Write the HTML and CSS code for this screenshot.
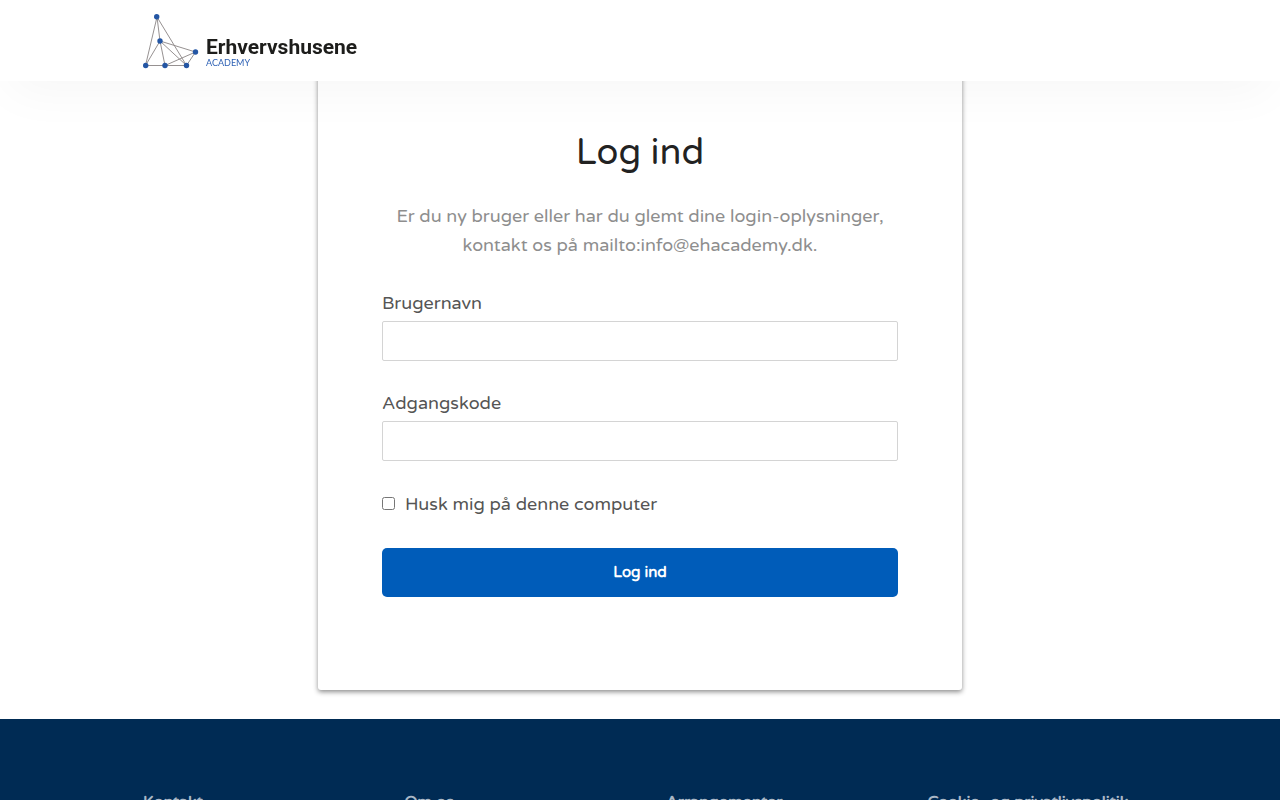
FILE: index.html
```html
<!DOCTYPE html>
<html lang="da">

<head>
    <meta charset="UTF-8">
    <title>Log ind - Erhvervshusene Academy</title>
    <meta name="viewport" content="width=device-width, initial-scale=1.0">
    <link rel="stylesheet" href="styles.css">
</head>

<body>
    <header class="site-header">
        <div class="container">
            <a class="logo" href="#" aria-label="Erhvervshusene Academy">
                <svg class="logo-mark" width="58" height="58" viewBox="1 0 58 58" aria-hidden="true">
                    <g fill="none" stroke="#8a8585" stroke-width="0.9">
                        <path d="M15 5 3.500 53.500H44.500L15 5 18 29 3.500 53.500" />
                        <path d="M23 53.500 18 29 53.500 40 23 53.500M18 29 44.500 53.500 53.500 40" />
                    </g>
                    <g fill="#2456a4">
                        <circle cx="14.700" cy="4.700" r="2.700" />
                        <circle cx="18" cy="29" r="2.700" />
                        <circle cx="53.500" cy="40" r="2.700" />
                        <circle cx="3.700" cy="53.500" r="2.700" />
                        <circle cx="23" cy="53.500" r="2.700" />
                        <circle cx="44.500" cy="53.500" r="2.700" />
                    </g>
                </svg>
                <span class="logo-text">
                    <span class="logo-name">Erhvervshusene</span>
                    <span class="logo-sub">ACADEMY</span>
                </span>
            </a>
        </div>
    </header>

    <main class="page">
        <form class="login-card">
            <h1>Log ind</h1>
            <p class="intro">Er du ny bruger eller har du glemt dine login-oplysninger, kontakt os på mailto:info@ehacademy.dk.</p>

            <div class="field">
                <label for="username">Brugernavn</label>
                <input type="text" id="username" name="username">
            </div>
            <div class="field">
                <label for="password">Adgangskode</label>
                <input type="password" id="password" name="password">
            </div>
            <div class="remember">
                <input type="checkbox" id="remember" name="remember">
                <label for="remember">Husk mig på denne computer</label>
            </div>

            <button type="submit" class="btn">Log ind</button>
        </form>
    </main>

    <footer class="site-footer">
        <div class="container footer-columns">
            <h2>Kontakt</h2>
            <h2>Om os</h2>
            <h2>Arrangementer</h2>
            <h2>Cookie- og privatlivspolitik</h2>
        </div>
    </footer>
</body>

</html>
```

FILE: styles.css
```css
* {
    box-sizing: border-box;
}

body {
    margin: 0;
    background-color: #fff;
    color: #555;
    font-family: "Varela Round", Inter, sans-serif;
    font-size: 18px;
    line-height: 29px;
}

.container {
    max-width: 1046px;
    margin: 0 auto;
    padding: 0 26px;
}

/* header */
.site-header {
    position: fixed;
    top: 0;
    left: 0;
    right: 0;
    z-index: 10;
    padding: 12px 0 11px;
    background-color: #fff;
    box-shadow: 0 20px 50px -10px rgba(0, 0, 0, 0.04);
}

.logo {
    display: inline-flex;
    align-items: flex-end;
    gap: 5px;
    vertical-align: top;
    text-decoration: none;
}

.logo-mark {
    display: block;
}

.logo-text {
    display: flex;
    flex-direction: column;
    padding-bottom: 2px;
}

.logo-name {
    color: #1d1d1b;
    font-family: Roboto, sans-serif;
    font-size: 21px;
    font-weight: 700;
    line-height: 22px;
}

.logo-sub {
    color: #2f62b5;
    font-family: Lato, sans-serif;
    font-size: 9px;
    line-height: 10px;
}

/* login */
.page {
    padding: 60px 16px 29px;
}

.login-card {
    max-width: 644px;
    margin: 0 auto;
    padding: 71px 64px 93px;
    background-color: #fff;
    border-radius: 3px;
    box-shadow: 0 2px 5px rgba(0, 0, 0, 0.45);
}

h1 {
    margin: 0 0 27px;
    color: #222;
    font-size: 36px;
    font-weight: 400;
    line-height: 44px;
    text-align: center;
}

.intro {
    margin: 0 0 29px;
    color: #8e8e8e;
    text-align: center;
}

.field {
    margin-bottom: 28px;
}

.field label {
    display: block;
    margin-bottom: 3px;
}

.field input {
    display: block;
    width: 100%;
    height: 40px;
    padding: 8px;
    border: 1px solid #d4d4d4;
    border-radius: 2px;
    background-color: #fff;
    font: inherit;
}

.remember {
    display: flex;
    align-items: baseline;
    gap: 10px;
    padding-top: 1px;
    margin-bottom: 29px;
}

.remember input {
    width: 13px;
    height: 13px;
    margin: 0;
}

.btn {
    display: block;
    width: 100%;
    padding: 10px;
    border: none;
    border-radius: 5px;
    background-color: #005cb9;
    color: #fff;
    font-family: inherit;
    font-size: 15px;
    font-weight: 700;
    line-height: 29px;
    cursor: pointer;
}

/* footer */
.site-footer {
    padding: 69px 0;
    background-color: #002b54;
}

.footer-columns {
    display: grid;
    grid-template-columns: repeat(4, 1fr);
    gap: 52px;
}

.footer-columns h2 {
    margin: 0;
    color: #a9b7c6;
    font-size: 16px;
    font-weight: 700;
    line-height: 29px;
    white-space: nowrap;
}
```
